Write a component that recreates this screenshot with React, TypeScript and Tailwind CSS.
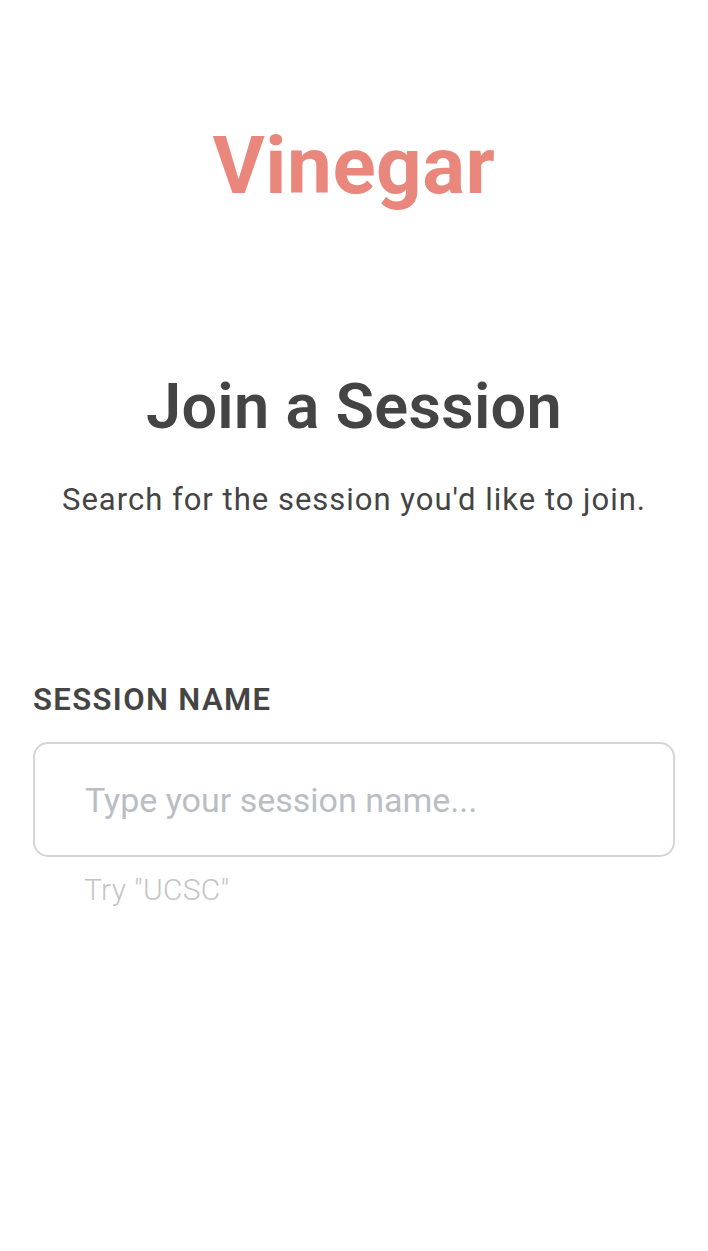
export default function App() {
  return (
    <div className="min-h-[1251px] w-full bg-white font-['Roboto','Liberation_Sans',sans-serif] text-[#444444]">
      <header className="flex justify-center pt-[126px]">
        <h1 className="text-[80px] font-bold leading-none text-[#ea877d] tracking-[0.5px]">Vinegar</h1>
      </header>

      <section className="mt-[169px] flex flex-col items-center px-[20px] text-center">
        <h2 className="text-[63px] font-semibold leading-none tracking-[0.3px]">Join a Session</h2>
        <p className="mt-[46px] text-[31px] leading-none tracking-[1px]">Search for the session you'd like to join.</p>
      </section>

      <form className="mt-[169px] px-[33px]">
        <label htmlFor="session" className="block text-[31px] font-semibold uppercase leading-none tracking-[1.4px]">
          Session Name
        </label>
        <input
          id="session"
          type="text"
          placeholder="Type your session name..."
          className="mt-[27px] block h-[115px] w-full rounded-[15px] border-2 border-[#d3d5d8] px-[50px] text-[34px] text-[#444444] outline-none placeholder:text-[#b9bec5]"
        />
        <p className="mt-[18px] pl-[51px] text-[30px] font-light leading-none tracking-[0.3px] text-[#c4c4c4]">Try "UCSC"</p>
      </form>
    </div>
  )
}
